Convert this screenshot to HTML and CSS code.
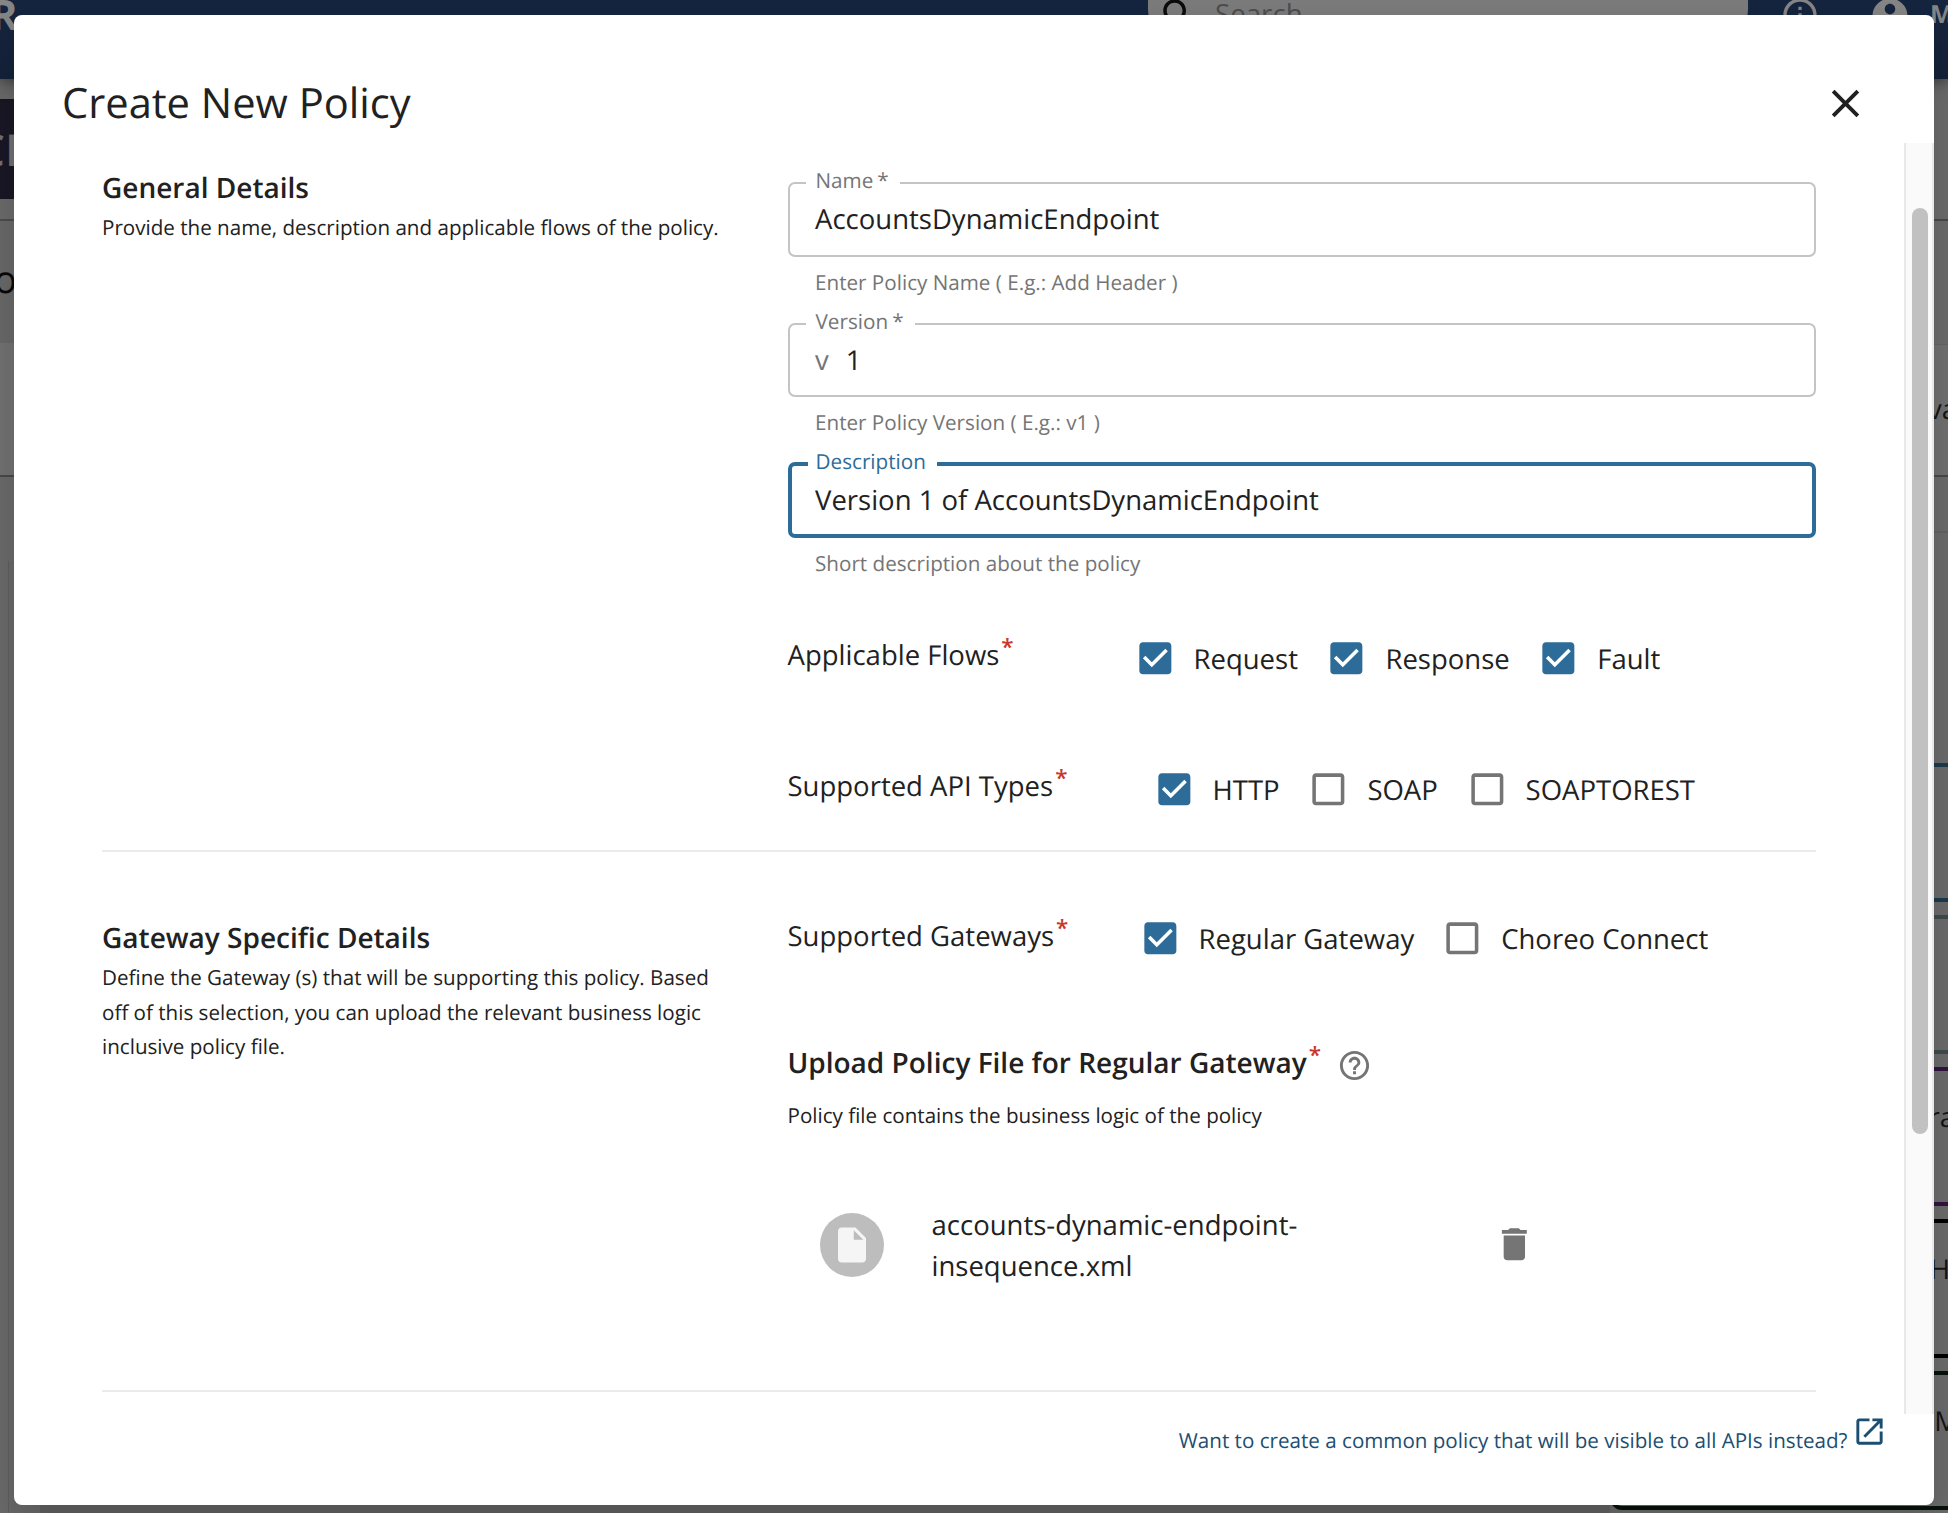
FILE: index.html
```html
<!DOCTYPE html>
<html lang="en">
<head>
<meta charset="utf-8">
<title>Create New Policy</title>
<link rel="stylesheet" href="styles.css">
</head>
<body>
<svg class="defs" width="0" height="0">
  <symbol id="on" viewBox="0 0 24 24"><path d="M19 3H5c-1.11 0-2 .9-2 2v14c0 1.100.89 2 2 2h14c1.110 0 2-.9 2-2V5c0-1.100-.89-2-2-2zm-9 14l-5-5 1.410-1.410L10 14.170l7.590-7.590L19 8l-9 9z"/></symbol>
  <symbol id="off" viewBox="0 0 24 24"><path d="M19 5v14H5V5h14m0-2H5c-1.100 0-2 .9-2 2v14c0 1.100.9 2 2 2h14c1.100 0 2-.9 2-2V5c0-1.100-.9-2-2-2z"/></symbol>
</svg>
<div class="app">
  <header class="topbar">
    <span class="brand">R</span>
    <div class="search">
      <svg viewBox="0 0 24 24"><path d="M15.500 14h-.79l-.28-.27C15.410 12.590 16 11.110 16 9.500 16 5.910 13.090 3 9.500 3S3 5.910 3 9.500 5.910 16 9.500 16c1.610 0 3.090-.59 4.230-1.570l.27.28v.79l5 4.990L20.490 19l-4.990-5zm-6 0C7.010 14 5 11.990 5 9.500S7.010 5 9.500 5 14 7.010 14 9.500 11.990 14 9.500 14z"/></svg>
      <span>Search</span>
    </div>
    <svg class="info" viewBox="0 0 24 24"><path d="M11 7h2v2h-2zm0 4h2v6h-2zm1-9C6.480 2 2 6.480 2 12s4.480 10 10 10 10-4.480 10-10S17.520 2 12 2zm0 18c-4.410 0-8-3.590-8-8s3.590-8 8-8 8 3.590 8 8-3.590 8-8 8z"/></svg>
    <svg class="user" viewBox="0 0 24 24"><path d="M12 2C6.480 2 2 6.480 2 12s4.480 10 10 10 10-4.480 10-10S17.520 2 12 2zm0 3c1.660 0 3 1.340 3 3s-1.340 3-3 3-3-1.340-3-3 1.340-3 3-3zm0 14.200c-2.500 0-4.710-1.280-6-3.220.03-1.990 4-3.080 6-3.080 1.990 0 5.970 1.090 6 3.080-1.290 1.940-3.500 3.220-6 3.220z"/></svg>
    <span class="account">M</span>
  </header>
  <div class="under">
    <div class="left">
      <div class="api">CI</div>
      <div class="crumb">o</div>
      <div class="stage"></div>
      <div class="panel"></div>
    </div>
    <div class="bottom">
      <div class="flow"><svg viewBox="0 0 20 10"><path d="M0 10L7 0h8L8 10z"/></svg></div>
      <div class="bar"></div>
    </div>
    <div class="right">
      <div class="r-head"></div>
      <div class="r-mid">va</div>
      <div class="r-gap"></div>
      <div class="chip c1"></div>
      <div class="chip c2"></div>
      <div class="chip c3">ra</div>
      <div class="chip c4">H</div>
      <div class="chip c5">M</div>
    </div>
  </div>
</div>

<div class="dialog">
  <div class="head">
    <h1>Create New Policy</h1>
    <svg class="close" viewBox="0 0 24 24"><path d="M19 6.410L17.590 5 12 10.590 6.410 5 5 6.410 10.590 12 5 17.590 6.410 19 12 13.410 17.590 19 19 17.590 13.410 12z"/></svg>
  </div>
  <div class="scroll">
    <div class="content">
      <section class="general">
        <div class="side">
          <h2>General Details</h2>
          <p>Provide the name, description and applicable flows of the policy.</p>
        </div>
        <div class="main">
          <fieldset><legend>Name<i>*</i></legend><span>AccountsDynamicEndpoint</span></fieldset>
          <div class="help">Enter Policy Name ( E.g.: Add Header )</div>
          <fieldset class="version"><legend>Version<i>*</i></legend><span class="pre">v</span><span>1</span></fieldset>
          <div class="help">Enter Policy Version ( E.g.: v1 )</div>
          <fieldset class="focus"><legend>Description</legend><span>Version 1 of AccountsDynamicEndpoint</span></fieldset>
          <div class="help">Short description about the policy</div>
          <div class="row flows">
            <div class="name">Applicable Flows<sup>*</sup></div>
            <label><svg class="on"><use href="#on"/></svg><span>Request</span></label>
            <label><svg class="on"><use href="#on"/></svg><span>Response</span></label>
            <label><svg class="on"><use href="#on"/></svg><span>Fault</span></label>
          </div>
          <div class="row types">
            <div class="name">Supported API Types<sup>*</sup></div>
            <label><svg class="on"><use href="#on"/></svg><span>HTTP</span></label>
            <label><svg><use href="#off"/></svg><span>SOAP</span></label>
            <label><svg><use href="#off"/></svg><span>SOAPTOREST</span></label>
          </div>
        </div>
      </section>
      <section class="gateway">
        <div class="side">
          <h2>Gateway Specific Details</h2>
          <p>Define the Gateway (s) that will be supporting this policy. Based<br>off of this selection, you can upload the relevant business logic<br>inclusive policy file.</p>
        </div>
        <div class="main">
          <div class="row gates">
            <div class="name">Supported Gateways<sup>*</sup></div>
            <label><svg class="on"><use href="#on"/></svg><span>Regular Gateway</span></label>
            <label><svg><use href="#off"/></svg><span>Choreo Connect</span></label>
          </div>
          <div class="upload">
            <h2>Upload Policy File for Regular Gateway<sup>*</sup></h2>
            <svg viewBox="0 0 24 24"><path d="M11 18h2v-2h-2v2zm1-16C6.480 2 2 6.480 2 12s4.480 10 10 10 10-4.480 10-10S17.520 2 12 2zm0 18c-4.410 0-8-3.590-8-8s3.590-8 8-8 8 3.590 8 8-3.590 8-8 8zm0-14c-2.210 0-4 1.790-4 4h2c0-1.100.9-2 2-2s2 .9 2 2c0 2-3 1.750-3 5h2c0-2.250 3-2.500 3-5 0-2.210-1.790-4-4-4z"/></svg>
          </div>
          <p>Policy file contains the business logic of the policy</p>
          <div class="file">
            <div class="avatar"><svg viewBox="0 0 24 24"><path d="M6 2c-1.100 0-1.990.9-1.990 2L4 20c0 1.100.89 2 1.990 2H18c1.100 0 2-.9 2-2V8l-6-6H6zm7 7V3.500L18.500 9H13z"/></svg></div>
            <div class="fname">accounts-dynamic-endpoint-<br>insequence.xml</div>
            <svg class="trash" viewBox="0 0 24 24"><path d="M6 19c0 1.100.9 2 2 2h8c1.100 0 2-.9 2-2V7H6v12zM19 4h-3.500l-1-1h-5l-1 1H5v2h14V4z"/></svg>
          </div>
        </div>
      </section>
    </div>
    <div class="track"><div class="thumb"></div></div>
  </div>
  <div class="foot">
    <a>Want to create a common policy that will be visible to all APIs instead?</a>
    <svg viewBox="0 0 24 24"><path d="M19 19H5V5h7V3H5c-1.110 0-2 .9-2 2v14c0 1.100.89 2 2 2h14c1.100 0 2-.9 2-2v-7h-2v7zM14 3v2h3.590l-9.830 9.830 1.410 1.410L19 6.410V10h2V3h-7z"/></svg>
  </div>
</div>
</body>
</html>
```
FILE: styles.css
```css
* { box-sizing: border-box; }
body {
  margin: 0;
  width: 1948px;
  height: 1513px;
  overflow: hidden;
  position: relative;
  font-family: "Open Sans", sans-serif;
  font-size: 27.5px;
  text-rendering: geometricPrecision;
  color: #212121;
  background: #6e6e6e;
}
.defs { display: block; }
h1, h2, p { margin: 0; font-weight: 400; }

/* dimmed application behind the dialog */
.app { height: 1513px; display: flex; flex-direction: column; overflow: hidden; }
.topbar {
  height: 79px;
  flex: none;
  display: flex;
  align-items: flex-start;
  position: relative;
  background: linear-gradient(#16253f, #14223a);
  box-shadow: 0 2px 14px rgba(0, 0, 0, .5);
  color: #858585;
  font-weight: 700;
}
.topbar > * { flex: none; }
.topbar svg { fill: #858585; }
.brand { width: 1148px; font-size: 42px; line-height: 30px; text-indent: -10px; }
.search {
  width: 600px;
  height: 34px;
  display: flex;
  background: #7b7b7b;
  border-radius: 0 0 24px 24px;
  font-weight: 400;
  color: #4d4d4d;
}
.search svg { width: 42px; height: 42px; margin: -6px 0 0 10px; fill: #0c0c0c; flex: none; }
.search span { margin-left: 15px; font-size: 27.7px; line-height: 28px; }
.info { width: 40px; height: 40px; margin: -5px 0 0 32px; }
.user { width: 42px; height: 42px; margin: -5px 0 0 49px; }
.account { margin-left: 19px; font-size: 25px; line-height: 29px; }
.under { flex: 1; display: flex; }
.left { width: 40px; display: flex; flex-direction: column; background: #6a6a6a; }
.api {
  height: 100px;
  margin-top: 20px;
  background: #191725;
  color: #707070;
  font-size: 44px;
  line-height: 100px;
  text-indent: -23px;
  font-weight: 600;
  overflow: hidden;
}
.crumb {
  height: 124px;
  margin-top: 20px;
  border-top: 2px solid #4c4c4c;
  background: #686868;
  color: #080808;
  font-size: 38px;
  line-height: 116px;
  text-indent: -6px;
}
.stage { height: 134px; background: #717171; border-bottom: 2px solid #484848; }
.panel { flex: 1; margin: 84px 0 0 8px; border-left: 1px solid #5e5e5e; background: #696969; }
.bottom { flex: 1; display: flex; align-items: flex-end; background: #616161; }
.flow { width: 1373px; height: 8px; border: solid #1f4a31; border-width: 0 2px; }
.flow svg { display: block; width: 20px; height: 10px; margin-left: 88px; fill: #333; }
.bar { width: 16px; height: 8px; margin-left: 77px; background: #3d3d3d; }
.right { width: 338px; display: flex; flex-direction: column; text-align: right; background: #6b6b6b; color: #151515; }
.r-head { height: 125px; margin-top: 140px; border-top: 2px solid #484848; }
.r-mid { height: 133px; line-height: 130px; background: #707070; border-bottom: 2px solid #484848; border-top: 1px solid #636363; }
.r-mid, .c3 { margin-right: -9px; }
.r-gap { height: 56px; border-bottom: 2px solid #626262; margin-bottom: 230px; }
.chip { flex: none; height: 139px; margin: 0 -20px 13px 0; padding-right: 20px; border: 4px solid; border-radius: 12px; line-height: 93px; }
.c1 { border-color: #1c3b4b; }
.c2 { border-color: #3f4b4b; }
.chip.c3 { border-color: #311440; padding-right: 9px; }
.chip.c4 { border-color: #000; padding-right: 14px; }
.chip.c5 { border-color: #07130a; padding-right: 5px; }

/* dialog */
.dialog {
  position: absolute;
  left: 14px;
  top: 15px;
  width: 1920px;
  height: 1490px;
  display: flex;
  flex-direction: column;
  background: #fff;
  border-radius: 8px;
  box-shadow: 0 16px 36px rgba(0, 0, 0, .16);
}
.head { height: 128px; display: flex; justify-content: space-between; padding: 61px 65px 0 48px; }
.head h1 { font-size: 41.650px; line-height: 54px; }
.close { width: 47px; height: 47px; margin-top: 3.500px; fill: #212121; }
.scroll { height: 1271px; display: flex; }
.content { width: 1890px; padding: 0 88px; }
.track { width: 30px; background: #fafafa; border: solid #e8e8e8; border-width: 0 2px; padding: 65px 4px 0 6px; }
.thumb { width: 16px; height: 926px; border-radius: 8px; background: #c1c1c1; }
section { display: flex; border-bottom: 2px solid #ebebeb; }
.general { height: 709px; }
.gateway { height: 540px; }
.side { width: 685.500px; flex: none; }
.main { width: 1028.500px; }
.side h2, .upload h2 { font-weight: 600; font-size: 28px; line-height: 42px; }
p { font-size: 20.600px; line-height: 34.500px; }
.side p { padding-top: 2px; }
.general .side { padding-top: 24px; }
.gateway .side { padding-top: 65px; }
.general .main { padding-top: 24px; }

/* outlined text fields */
fieldset {
  height: 90px;
  margin: 0;
  padding: 0 25.500px;
  border: 2px solid #c4c4c4;
  border-radius: 7px;
  min-width: 0;
  line-height: 42px;
}
legend { height: 32px; margin-left: -9.500px; padding: 0 11px 0 10px; font-size: 20.700px; line-height: 29px; color: #757575; }
legend i { font-style: normal; margin-left: 4px; }
fieldset span { display: inline-block; }
.pre { color: #757575; margin-right: 17px; }
.version { height: 89px; margin-top: 1px; }
.focus { border: 4px solid #2d6c98; padding: 0 23.500px; }
.focus legend { color: #2d6c98; margin-left: -7.500px; padding-left: 8px; }
.help { height: 50.300px; padding: 9px 0 0 27.500px; font-size: 20.650px; line-height: 34px; color: #757575; }

/* checkbox rows */
.row { display: flex; height: 44px; align-items: center; }
.row .name { line-height: 44px; height: 48px; }
label { display: flex; align-items: center; line-height: 44px; margin-right: 27.500px; }
label span { padding-top: 3px; }
label svg { width: 42.700px; height: 42.700px; margin-right: 17.300px; fill: #757575; }
label svg.on { fill: #2d6c98; }
.types label { margin-right: 27.800px; }
.gates label { margin-right: 27px; }
sup { color: #c9372c; font-size: 22.500px; font-weight: 600; line-height: 0; vertical-align: 10px; margin-left: 2px; }
.flows { margin-top: 48.500px; }
.flows .name { width: 346px; }
.types { margin-top: 87px; }
.types .name { width: 365px; }
.gates { margin-top: 64.500px; }
.gates .name { width: 351px; }

.upload { display: flex; margin-top: 81.500px; }
.upload svg { width: 35px; height: 35px; margin: 5.500px 0 0 16px; fill: #757575; }
.main p { margin-top: 15px; }
.file { display: flex; margin-top: 69px; padding-left: 32px; }
.avatar { width: 64px; height: 64px; margin-top: 10px; border-radius: 50%; background: #bdbdbd; display: flex; align-items: center; justify-content: center; }
.avatar svg { width: 42px; height: 42px; fill: #f5f5f5; }
.fname { width: 609px; padding: 2px 0 0 48px; line-height: 41px; }
.trash { width: 42.700px; height: 42.700px; margin-top: 20.500px; fill: #757575; }

.foot { display: flex; justify-content: flex-end; padding-right: 47.500px; color: #1b4f72; }
.foot a { font-size: 20.600px; line-height: 34px; margin-top: 10px; }
.foot svg { width: 35px; height: 35px; margin-left: 4px; fill: #1b4f72; }
```
